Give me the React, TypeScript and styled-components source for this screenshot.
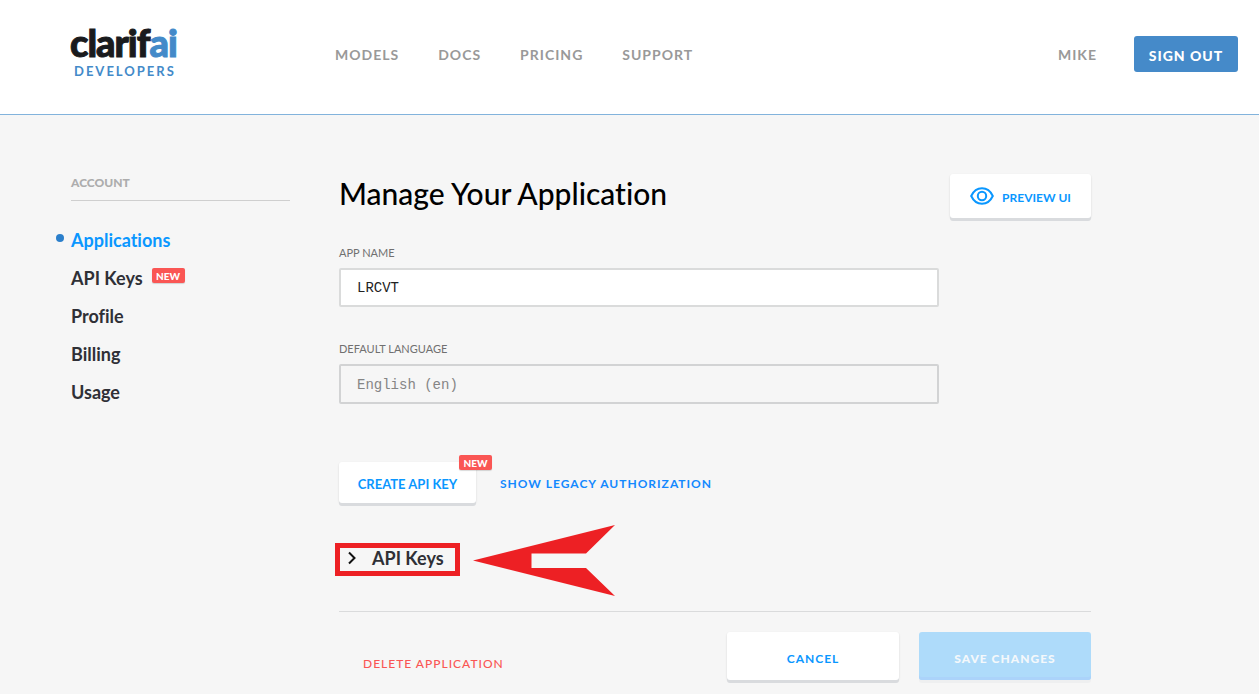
import React from "react";
import styled, { createGlobalStyle, css } from "styled-components";

const blue = "#0a97ff";
const sans = `Lato, "Liberation Sans", sans-serif`;

const GlobalStyle = createGlobalStyle`
  *, *::before, *::after { box-sizing: border-box; }
  body { margin: 0; background: #f6f6f6; color: #2f3036; font-family: ${sans}; font-variant-ligatures: none; }
  button, input { font-family: inherit; }
  a { text-decoration: none; color: inherit; }
`;

const Header = styled.header`
  display: flex;
  align-items: flex-start;
  height: 115px;
  padding: 0 21px 0 70px;
  background: #fff;
  border-bottom: 1px solid #82b3dc;
`;

const Logo = styled.a`
  display: flex;
  flex-direction: column;
  width: 265px;
  padding-top: 19px;
`;

const Wordmark = styled.span`
  font-size: 38px;
  line-height: 46px;
  font-weight: 900;
  letter-spacing: -1px;
  color: #1a1b1d;
  -webkit-text-stroke: 1px currentColor;
  em { font-style: normal; color: #438ac9; }
`;

const LogoCaption = styled.span`
  padding-left: 4px;
  font-size: 13px;
  line-height: 12px;
  font-weight: 700;
  letter-spacing: 2px;
  color: #438ac9;
`;

const Nav = styled.nav`
  display: flex;
  flex: 1;
  gap: 39px;
  padding-top: 45px;
`;

const NavLink = styled.a`
  font-size: 14px;
  line-height: 20px;
  font-weight: 700;
  letter-spacing: 1px;
  color: #999;
`;

const UserArea = styled.div`
  display: flex;
  align-items: flex-start;
  gap: 37px;
  padding-top: 36px;
  ${NavLink} { padding-top: 9px; }
`;

const SignOut = styled.button`
  width: 104px;
  height: 36px;
  padding: 2px 0 0;
  border: 0;
  border-radius: 3px;
  background: #458ac9;
  color: #fff;
  font-size: 14px;
  font-weight: 900;
  letter-spacing: 1px;
`;

const Page = styled.div`
  display: grid;
  grid-template-columns: 219px minmax(0, 1fr);
  gap: 49px;
  padding: 59px 168px 12px 71px;
`;

const SideTitle = styled.h2`
  margin: 0 0 20px;
  padding-bottom: 9px;
  border-bottom: 1px solid #cfcfcf;
  font-size: 12px;
  line-height: 17px;
  font-weight: 900;
  color: #adadad;
`;

const SideList = styled.ul`
  margin: 0;
  padding: 0;
  list-style: none;
`;

const SideItem = styled.li`
  position: relative;
  display: flex;
  align-items: center;
  gap: 9px;
  height: 38px;
`;

const SideLink = styled.a<{ $active?: boolean }>`
  font-size: 18px;
  line-height: 24px;
  font-weight: 700;
  color: ${(p) => (p.$active ? blue : "#2f3036")};
  ${(p) =>
    p.$active &&
    css`
      &::before {
        content: "";
        position: absolute;
        left: -15px;
        top: 13px;
        width: 8px;
        height: 8px;
        border-radius: 50%;
        background: #2b7fcb;
      }
    `}
`;

const Badge = styled.span`
  display: block;
  width: 33px;
  height: 15px;
  margin-bottom: 6px;
  border-radius: 2px;
  background: #fa5654;
  box-shadow: 0 1px 1px rgba(0, 0, 0, 0.15);
  color: #fff;
  font-size: 10px;
  line-height: 17px;
  font-weight: 900;
  text-align: center;
`;

const TitleRow = styled.div`
  display: flex;
  justify-content: space-between;
  align-items: flex-start;
  margin-bottom: 27px;
`;

const Title = styled.h1`
  margin: 0;
  font-size: 30px;
  line-height: 38px;
  font-weight: 500;
  color: #000;
`;

const Button = styled.button<{ $width: number; $height: number }>`
  position: relative;
  display: flex;
  align-items: center;
  justify-content: center;
  gap: 8px;
  width: ${(p) => p.$width}px;
  height: ${(p) => p.$height}px;
  padding: 2px 0 0;
  border: 0;
  border-radius: 3px;
  background: #fff;
  box-shadow: 0 3px 0 #d9dbde, 0 1px 2px rgba(0, 0, 0, 0.15);
  color: ${blue};
  font-size: 13px;
  font-weight: 700;
  white-space: nowrap;
`;

const PreviewButton = styled(Button)`
  font-size: 12px;
  svg { margin-top: -2px; }
`;

const FooterButton = styled(Button)`
  padding-top: 4px;
  font-size: 12px;
  letter-spacing: 1px;
`;

const SaveButton = styled(FooterButton)`
  background: #aedbfa;
  box-shadow: inset 0 -3px 0 #abd3fa, 0 3px 0 #eeeff0;
  color: #f4f8fb;
  font-weight: 900;
`;

const Field = styled.div`
  display: flex;
  flex-direction: column;
  max-width: 600px;
  margin-bottom: 34px;
`;

const Label = styled.label`
  margin-bottom: 7px;
  font-size: 11px;
  line-height: 16px;
  color: #707070;
`;

const TextInput = styled.input`
  height: 39px;
  padding: 0 16px;
  border: 2px solid #dadbdb;
  border-radius: 2px;
  background: #fff;
  color: #222;
  font-family: "Liberation Mono", monospace;
  font-size: 14px;
  &:disabled {
    height: 40px;
    padding-top: 2px;
    border-color: #d2d3d4;
    background: #f6f6f6;
    color: #858585;
  }
`;

const Actions = styled.div`
  display: flex;
  align-items: center;
  gap: 24px;
  margin-top: 58px;
`;

const CornerBadge = styled(Badge)`
  position: absolute;
  top: -7px;
  right: -16px;
`;

const TextAction = styled.button<{ $danger?: boolean }>`
  padding: 2px 0 0;
  border: 0;
  background: none;
  color: ${(p) => (p.$danger ? "#fa5654" : "#1389ff")};
  font-size: 12px;
  line-height: 16px;
  font-weight: ${(p) => (p.$danger ? 500 : 700)};
  letter-spacing: 1px;
`;

const KeysSection = styled.section`
  position: relative;
  margin-top: 43px;
  padding-bottom: 41px;
  border-bottom: 1px solid #dadbdc;
`;

const KeysToggle = styled.button`
  display: flex;
  align-items: center;
  gap: 14px;
  padding: 0 0 0 8px;
  border: 0;
  background: none;
  color: #2f3036;
  font-size: 18px;
  line-height: 24px;
  font-weight: 700;
`;

const Highlight = styled.div`
  position: absolute;
  left: -4px;
  top: -3px;
  width: 125px;
  height: 33px;
  border: 5px solid #ed2024;
  pointer-events: none;
`;

const Arrow = styled.svg`
  position: absolute;
  left: 134px;
  top: -21px;
`;

const Footer = styled.div`
  display: flex;
  align-items: center;
  gap: 20px;
  padding: 20px 0 0 24px;
  ${TextAction} { margin: 14px auto 0 0; }
`;

export default function App() {
  return (
    <>
      <GlobalStyle />
      <Header>
        <Logo href="#">
          <Wordmark>clarif<em>ai</em></Wordmark>
          <LogoCaption>DEVELOPERS</LogoCaption>
        </Logo>
        <Nav>
          {["MODELS", "DOCS", "PRICING", "SUPPORT"].map((name) => (
            <NavLink href="#" key={name}>{name}</NavLink>
          ))}
        </Nav>
        <UserArea>
          <NavLink href="#">MIKE</NavLink>
          <SignOut>SIGN OUT</SignOut>
        </UserArea>
      </Header>
      <Page>
        <aside>
          <SideTitle>ACCOUNT</SideTitle>
          <SideList>
            <SideItem><SideLink href="#" $active>Applications</SideLink></SideItem>
            <SideItem><SideLink href="#">API Keys</SideLink><Badge>NEW</Badge></SideItem>
            <SideItem><SideLink href="#">Profile</SideLink></SideItem>
            <SideItem><SideLink href="#">Billing</SideLink></SideItem>
            <SideItem><SideLink href="#">Usage</SideLink></SideItem>
          </SideList>
        </aside>
        <main>
          <TitleRow>
            <Title>Manage Your Application</Title>
            <PreviewButton $width={141} $height={44}>
              <svg width="24" height="18" viewBox="0 0 24 18" fill="none" stroke={blue} strokeWidth="2">
                <path d="M1.2 9C3.4 4.3 7.3 1.3 12 1.3S20.6 4.3 22.8 9C20.6 13.7 16.7 16.7 12 16.7S3.4 13.7 1.2 9Z" />
                <circle cx="12" cy="9" r="4.2" />
              </svg>
              PREVIEW UI
            </PreviewButton>
          </TitleRow>
          <Field>
            <Label htmlFor="app-name">APP NAME</Label>
            <TextInput id="app-name" defaultValue="LRCVT" />
          </Field>
          <Field>
            <Label htmlFor="language">DEFAULT LANGUAGE</Label>
            <TextInput id="language" defaultValue="English (en)" disabled />
          </Field>
          <Actions>
            <Button $width={137} $height={41}>
              CREATE API KEY
              <CornerBadge>NEW</CornerBadge>
            </Button>
            <TextAction>SHOW LEGACY AUTHORIZATION</TextAction>
          </Actions>
          <KeysSection>
            <KeysToggle aria-expanded="false">
              <svg width="11" height="14" viewBox="0 0 11 14" fill="none" stroke="#111" strokeWidth="2">
                <path d="M2 1.5L7.5 7L2 12.5" />
              </svg>
              API Keys
            </KeysToggle>
            <Highlight />
            <Arrow width="142" height="72" viewBox="0 0 142 72" fill="#ed2024">
              <path d="M0 35.5L142 0L113 28.5H58.5V43H113L142 71Z" />
            </Arrow>
          </KeysSection>
          <Footer>
            <TextAction $danger>DELETE APPLICATION</TextAction>
            <FooterButton $width={172} $height={48}>CANCEL</FooterButton>
            <SaveButton $width={172} $height={48}>SAVE CHANGES</SaveButton>
          </Footer>
        </main>
      </Page>
    </>
  );
}
